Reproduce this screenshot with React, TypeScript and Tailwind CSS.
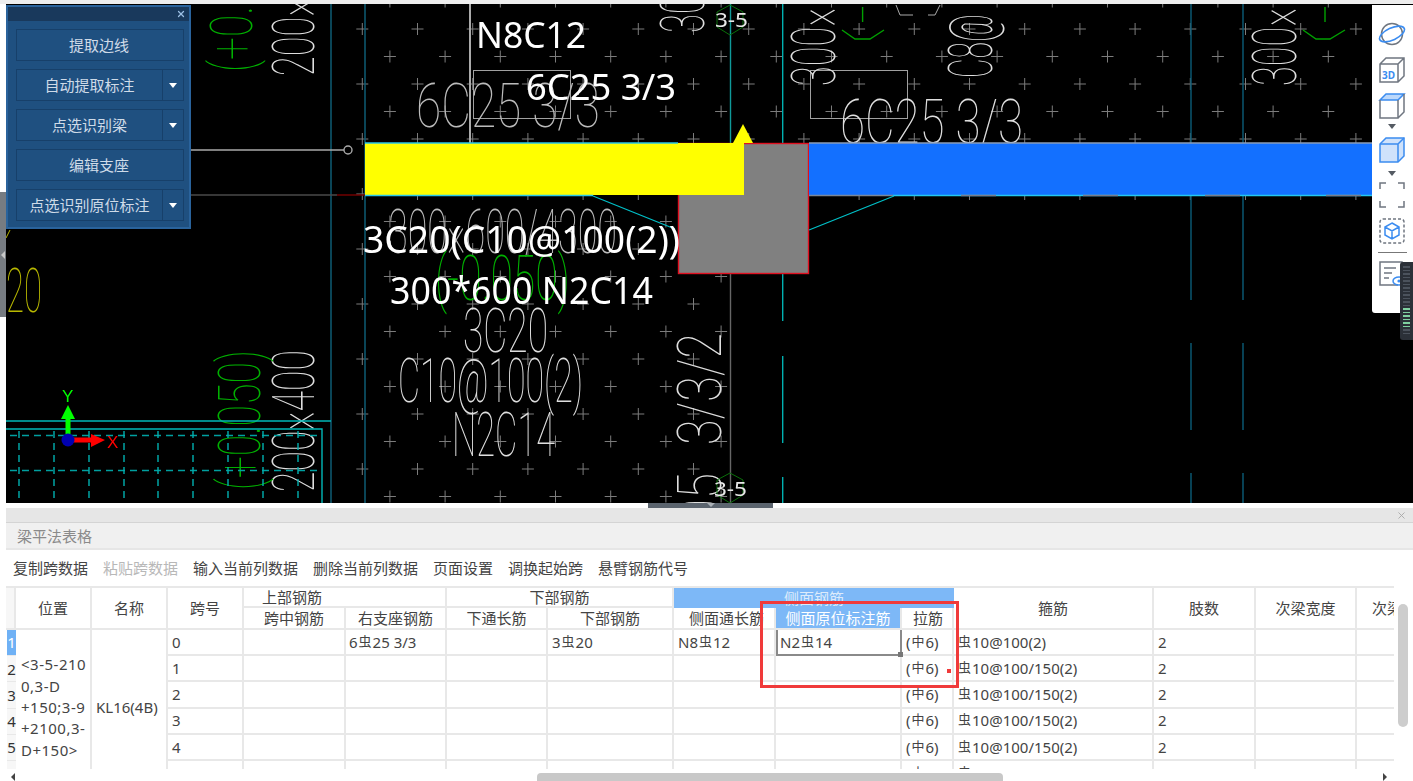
import type { ReactNode } from "react";
import { X } from "lucide-react";

// table columns, widths read off the reference
const columns = "grid-cols-[10px_76px_76px_76px_102px_101px_101px_126px_102px_126px_52px_200px_102px_101px_101px]";

function Cell({ className = "", children }: { className?: string; children?: ReactNode }) {
    return (
        <div className={`border-r-2 border-b-2 border-[#e8e8e8] flex items-center overflow-hidden whitespace-nowrap ${className}`}>
            {children}
        </div>
    );
}

function Head({ className = "", children }: { className?: string; children?: ReactNode }) {
    return <Cell className={`justify-center text-[#444] ${className}`}>{children}</Cell>;
}

// rebar grade symbols, set a little smaller and higher than the digits
function Bar({ plain }: { plain?: boolean }) {
    return <span className="text-[13px] relative -top-[2px] mx-[1px]">{plain ? "中" : "虫"}</span>;
}

function Rebar({ before, after, plain }: { before?: string; after: string; plain?: boolean }) {
    return (
        <span>
            {before}
            <Bar plain={plain} />
            {after}
        </span>
    );
}

function Body() {
    const rows = [0, 1, 2, 3, 4, 5];
    return (
        <>
            {rows.map((r) => {
                const rowStart = ["row-start-3", "row-start-4", "row-start-5", "row-start-6", "row-start-7", "row-start-8"][r];
                return (
                    <div key={r} className="contents">
                        <div className={`col-start-1 ${rowStart} flex items-center justify-center border-b border-[#e8e8e8] ml-[1px] ${r === 0 ? "bg-[#6fb1f5] text-white" : "bg-[#f7f7f7] text-[#333]"}`}>{r + 1}</div>
                        <Cell className={`col-start-4 ${rowStart} pl-[4px]`}>{r}</Cell>
                        <Cell className={`col-start-5 ${rowStart}`} />
                        <Cell className={`col-start-6 ${rowStart} pl-[3px]`}>{r === 0 && <Rebar before="6" after="25 3/3" />}</Cell>
                        <Cell className={`col-start-7 ${rowStart}`} />
                        <Cell className={`col-start-8 ${rowStart} pl-[4px]`}>{r === 0 && <Rebar before="3" after="20" />}</Cell>
                        <Cell className={`col-start-9 ${rowStart} pl-[4px]`}>{r === 0 && <Rebar before="N8" after="12" />}</Cell>
                        {r === 0 ? (
                            <div className={`col-start-10 ${rowStart} relative border-2 border-t-0 border-[#8a8a8a] flex items-center pl-[2px] overflow-visible`}>
                                <Rebar before="N2" after="14" />
                                <span className="absolute -right-[3px] -bottom-[3px] size-[5px] bg-[#777]" />
                            </div>
                        ) : (
                            <Cell className={`col-start-10 ${rowStart}`} />
                        )}
                        <Cell className={`col-start-11 ${rowStart} pl-[4px]`}>
                            <Rebar before="(" after="6)" plain />
                        </Cell>
                        <Cell className={`col-start-12 ${rowStart} pl-[3px]`}>
                            <Rebar after={r === 0 ? "10@100(2)" : "10@100/150(2)"} />
                        </Cell>
                        <Cell className={`col-start-13 ${rowStart} pl-[4px]`}>2</Cell>
                        <Cell className={`col-start-14 ${rowStart}`} />
                        <Cell className={`col-start-15 ${rowStart}`} />
                    </div>
                );
            })}
        </>
    );
}

function BeamTable() {
    return (
        <div className="w-[1388px] h-[183px] overflow-hidden border-t-2 border-[#e8e8e8]">
            <div className={`grid ${columns} grid-rows-[20px_22px_repeat(6,26.2px)] w-[1475px] text-[15px] text-[#444]`}>
                <div className="row-span-2 border-r-2 border-b-2 border-[#e8e8e8] bg-[#f7f7f7]" />
                <Head className="row-span-2">位置</Head>
                <Head className="row-span-2">名称</Head>
                <Head className="row-span-2">跨号</Head>
                <div className="col-span-2 border-r-2 border-b-2 border-[#e8e8e8] flex items-center pl-[18px]">上部钢筋</div>
                <div className="col-span-2 border-r-2 border-b-2 border-[#e8e8e8] flex items-center justify-center">下部钢筋</div>
                <div className="col-span-3 bg-[#7db8f7] text-[#dcebfb] flex items-center justify-center">侧面钢筋</div>
                <Head className="row-span-2 col-start-12">箍筋</Head>
                <Head className="row-span-2 col-start-13">肢数</Head>
                <Head className="row-span-2 col-start-14">次梁宽度</Head>
                <div className="row-span-2 col-start-15 border-b-2 border-[#e8e8e8] flex items-center pl-[15px] whitespace-nowrap">次梁高度</div>

                <Head className="col-start-5 row-start-2">跨中钢筋</Head>
                <Head className="col-start-6 row-start-2">右支座钢筋</Head>
                <Head className="col-start-7 row-start-2">下通长筋</Head>
                <Head className="col-start-8 row-start-2">下部钢筋</Head>
                <Head className="col-start-9 row-start-2 !justify-start pl-[15px]">侧面通长筋</Head>
                <Head className="col-start-10 row-start-2 bg-[#7db8f7] !text-white">侧面原位标注筋</Head>
                <Head className="col-start-11 row-start-2 pl-[2px]">拉筋</Head>

                <Cell className="col-start-2 row-start-3 row-span-6 pl-[5px] !whitespace-pre-line leading-[21.3px] tracking-[0.5px]">
                    {"<3-5-210\n0,3-D\n+150;3-9\n+2100,3-\nD+150>"}
                </Cell>
                <Cell className="col-start-3 row-start-3 row-span-6 pl-[4px]">KL16(4B)</Cell>
                <Body />
            </div>
        </div>
    );
}

function PanelButton({ label, split }: { label: string; split?: boolean }) {
    return (
        <div className="h-[32px] flex border border-[#17406a] bg-[#1f5080] text-[15px] text-[#cfdbe8]">
            <div className={`flex-1 flex items-center justify-center ${split ? "" : "pr-[2px]"}`}>{label}</div>
            {split && (
                <div className="w-[21px] border-l border-[#17406a] flex items-center justify-center">
                    <span className="w-0 h-0 border-x-[4.5px] border-x-transparent border-t-[5px] border-t-white" />
                </div>
            )}
        </div>
    );
}

function FloatingPanel() {
    return (
        <div className="absolute left-0 top-[1px] w-[185px] h-[224px] bg-[#1f5080] border-2 border-[#2a639c]">
            <div className="h-[14px] bg-[#19395c] flex items-center justify-end pr-[3px]">
                <X className="size-[10px] text-[#9cc0e4]" strokeWidth={3} />
            </div>
            <div className="flex flex-col gap-[8px] pl-[8px] pr-[5px] pt-[8px]">
                <PanelButton label="提取边线" />
                <PanelButton label="自动提取标注" split />
                <PanelButton label="点选识别梁" split />
                <PanelButton label="编辑支座" />
                <PanelButton label="点选识别原位标注" split />
            </div>
        </div>
    );
}

const iconGray = "#6f7680";
const iconBlue = "#3b8cf0";

function Triangle({ className = "" }: { className?: string }) {
    return <span className={`w-0 h-0 border-x-[4px] border-x-transparent border-t-[5px] border-t-[#555b63] ${className}`} />;
}

function SideToolbar() {
    return (
        <div className="absolute right-0 top-[1px] w-[41px] h-[308px] bg-white rounded-bl-[3px] flex flex-col items-center pr-[1px] pt-[15px]">
            <svg width="28" height="28" viewBox="0 0 28 28" fill="none" strokeWidth="1.5">
                <circle cx="14" cy="14" r="10.5" stroke={iconGray} />
                <ellipse cx="14" cy="14" rx="13.5" ry="6" transform="rotate(-25 14 14)" stroke={iconBlue} strokeWidth="1.6" />
            </svg>
            <svg className="mt-[8px]" width="28" height="28" viewBox="0 0 28 28" fill="none" strokeWidth="1.5" stroke={iconGray}>
                <path d="M2 8 L8 2 H26 V20 L20 26 H2 Z M2 8 H20 V26 M20 8 L26 2" />
                <text x="4" y="23" fontSize="10" fontWeight="700" fill={iconBlue} stroke="none" fontFamily="Noto Sans">3D</text>
            </svg>
            <svg className="mt-[8px]" width="28" height="28" viewBox="0 0 28 28" fill="none" strokeWidth="1.5" stroke={iconGray}>
                <path d="M2 8 L8 2 H26 L20 8 Z" fill="#bcd8fb" stroke={iconBlue} />
                <path d="M2 8 V26 H20 V8 M20 26 L26 20 V2" />
            </svg>
            <Triangle className="mt-[4px]" />
            <svg className="mt-[7px]" width="28" height="28" viewBox="0 0 28 28" fill="#cfe2fb" strokeWidth="1.5" stroke={iconBlue}>
                <path d="M2 8 L8 2 H26 V20 L20 26 H2 Z" />
                <path d="M2 8 H20 V26 M20 8 L26 2" fill="none" />
            </svg>
            <Triangle className="mt-[7px]" />
            <svg className="mt-[5px]" width="28" height="28" viewBox="0 0 28 28" fill="none" strokeWidth="1.5" stroke={iconGray}>
                <path d="M2 8 V2 H8 M20 2 H26 V8 M26 20 V26 H20 M8 26 H2 V20" />
            </svg>
            <svg className="mt-[8px]" width="28" height="28" viewBox="0 0 28 28" fill="none" strokeWidth="1.5">
                <rect x="2" y="2" width="24" height="24" rx="3" stroke={iconGray} strokeDasharray="3 2" />
                <path d="M14 6 L21 10 V18 L14 22 L7 18 V10 Z M7 10 L14 14 L21 10 M14 14 V22" stroke={iconBlue} />
            </svg>
            <div className="w-[29px] h-[1px] bg-[#777] mt-[7px]" />
            <svg className="mt-[7px]" width="28" height="28" viewBox="0 0 28 28" fill="none" strokeWidth="1.5">
                <path d="M20 25 H2 V2 H24 V14" stroke={iconGray} />
                <path d="M6 8 H18 M6 13 H14 M6 18 H11" stroke={iconGray} />
                <ellipse cx="21" cy="21" rx="6" ry="4" stroke={iconBlue} />
                <circle cx="21" cy="21" r="1.6" fill={iconBlue} />
            </svg>
        </div>
    );
}

function Meter() {
    const ticks = [0, 1, 2, 3, 4, 5, 6, 7, 8, 9, 10, 11, 12, 13, 14, 15, 16, 17, 18, 19];
    return (
        <div className="absolute right-0 top-[258px] w-[13px] h-[78px] bg-[#2b3038] rounded-l-[3px] flex flex-col items-center gap-[2px] pt-[4px]">
            {ticks.map((t) => (
                <span key={t} className={`w-[7px] h-[1.5px] ${t > 11 && t < 18 ? "bg-[#7fd0a0]" : "bg-[#4b525c]"}`} />
            ))}
        </div>
    );
}

// stroke-like text of the CAD drawing: thin face stretched to the box it fills
function Cad({ x, y, w, h, text, color = "#dedede", up }: { x: number; y: number; w: number; h: number; text: string; color?: string; up?: boolean }) {
    return (
        <text
            transform={`translate(${x} ${y})${up ? " rotate(-90)" : ""}`}
            fontFamily="Roboto, sans-serif"
            fontWeight="100"
            fontSize={h / 0.71}
            textLength={w}
            lengthAdjust="spacingAndGlyphs"
            fill={color}
        >
            {text}
        </text>
    );
}

function Label({ x, y, w, size, text }: { x: number; y: number; w: number; size: number; text: string }) {
    return (
        <text x={x} y={y} fontFamily="Noto Sans, sans-serif" fontSize={size} textLength={w} lengthAdjust="spacingAndGlyphs" fill="#fff">
            {text}
        </text>
    );
}

function crossPath() {
    let d = "";
    for (let n = -1; n < 18; n++) {
        const y = 29 + 27.5 * n;
        const start = n % 2 === 0 ? 362.3 : 389.9;
        for (let x = start; x < 1372; x += 55.2) {
            if (y > 196 && x > 728) continue;
            d += `M${x - 6} ${y}H${x + 6}M${x} ${y - 6}V${y + 6}`;
        }
    }
    return d;
}

function Drawing() {
    const dashX = [19, 54, 89, 124, 158, 193, 228, 263, 298];
    return (
        <svg className="absolute inset-0 will-change-transform" width="1407" height="499" viewBox="6 4 1407 499">
            <rect x="6" y="4" width="1407" height="499" fill="#000" />
            <path d={crossPath()} stroke="#7c7c7c" strokeWidth="1" fill="none" />

            {/* axis lines */}
            <path d="M331 4V503M365 4V503" stroke="#0e5c74" strokeWidth="1.5" />
            <path d="M1191 4V300M1191 343V430M1191 473V503M1243 4V300M1243 343V430M1243 473V503" stroke="#0b5c78" strokeWidth="1.4" />
            <path d="M730.5 4V143" stroke="#0f9a9a" strokeWidth="1.4" />
            <path d="M730.5 270V503" stroke="#666" strokeWidth="1.4" />
            <path d="M782.7 4V143M782.7 270V321M782.7 356V443M782.7 477V503" stroke="#00b0b0" strokeWidth="1.4" />
            <path d="M191 150H344" stroke="#aaa" strokeWidth="1.4" />
            <circle cx="348" cy="150" r="4" stroke="#aaa" strokeWidth="1.4" fill="none" />
            <path d="M191 195H337" stroke="#4a4a4a" strokeWidth="1.4" />
            <path d="M337 195H365" stroke="#7a0000" strokeWidth="1.4" />
            <path d="M470 4V143" stroke="#aaa" strokeWidth="2" />
            <rect x="473.5" y="70.5" width="97" height="48" stroke="#a0a0a0" fill="none" />
            <rect x="810.5" y="70.5" width="97" height="48" stroke="#a0a0a0" fill="none" />

            {/* thin drawing text */}
            <Cad x={416} y={127} w={184} h={44} text="6C25 3/3" color="#bbb" />
            <Cad x={840} y={143} w={183} h={43} text="6C25 3/3" />
            <Cad x={388} y={253} w={229} h={44} text="300×600/4300" color="#bbb" />
            <Cad x={435} y={300} w={135} h={45} text="(-0.050)" color="#00b000" />
            <Cad x={463} y={352} w={85} h={43} text="3C20" />
            <Cad x={398} y={402} w={185} h={44} text="C10@100(2)" />
            <Cad x={452} y={456} w={103} h={43} text="N2C14" />
            <Cad x={314} y={492} w={142} h={42} text="200×400" up />
            <Cad x={260} y={490} w={140} h={42} text="(+0.050)" color="#00b000" up />
            <Cad x={314} y={76} w={78} h={42} text="200×" up />
            <Cad x={252} y={72} w={66} h={42} text="(+0." color="#00b000" up />
            <Cad x={835} y={86} w={78} h={43} text="300×" up />
            <Cad x={1296} y={86} w={78} h={43} text="300×" up />
            <Cad x={992} y={78} w={64} h={44} text="C8@" up />
            <Cad x={704} y={33} w={38} h={43} text="30" up />
            <Cad x={721} y={445} w={112} h={43} text="3/3/2" up />
            <Cad x={721} y={525} w={52} h={43} text="05" up />
            <Cad x={6} y={312} w={36} h={44} text="20" color="#b8b800" />
            <path d="M842 30L855 39H870L884 30M1303 30L1316 39H1330L1345 30" stroke="#00a000" strokeWidth="1.4" fill="none" />
            <path d="M862.6 7V22M1325 7V22" stroke="#00a000" strokeWidth="1.4" />
            <path d="M896 5L900 15H913M928 15H935L940 5" stroke="#aaa" fill="none" />
            <path d="M6 238L10 230" stroke="#b8b800" />

            {/* coloured beams and column */}
            <rect x="678.5" y="143.5" width="130" height="130" fill="#808080" stroke="#e01020" strokeWidth="1.4" />
            <rect x="365" y="143" width="379" height="52" fill="#ffff00" />
            <path d="M365 143H678M365 195.5H593" stroke="#28c8e8" strokeWidth="1.4" />
            <rect x="809" y="143" width="563" height="53" fill="#1370ff" />
            <path d="M809 143H1372" stroke="#8a9cb8" strokeWidth="1.6" />
            <path d="M809 195.5H893" stroke="#7a8698" strokeWidth="1.4" />
            <path d="M893 195.5H1372" stroke="#22c8f0" strokeWidth="1.4" />
            <path d="M961 195.5H996M1083 195.5H1118M1205 195.5H1240M1326 195.5H1361" stroke="#7a7a8a" strokeWidth="1.4" />
            <path d="M593 196L675 229M809 230L894 196" stroke="#00c0c8" strokeWidth="1.2" fill="none" />
            <path d="M743 124L733 143H753Z" fill="#ffff00" />

            {/* grid marker bubbles */}
            <polygon points="730,5 743,12 743,27 730,35 717,27 717,12" fill="none" stroke="#0a700a" />
            <polygon points="730,473 743,480 743,495 730,503 717,495 717,480" fill="none" stroke="#0a700a" />
            <text x="715" y="27" fontFamily="Noto Sans, sans-serif" fontSize="19" textLength="33" lengthAdjust="spacingAndGlyphs" fill="#e8e8e8">3-5</text>
            <text x="714" y="496" fontFamily="Noto Sans, sans-serif" fontSize="19" textLength="33" lengthAdjust="spacingAndGlyphs" fill="#e8e8e8">3-5</text>

            {/* selected beam annotations */}
            <Label x={476} y={48} w={110} size={36} text="N8C12" />
            <Label x={526} y={100} w={150} size={36} text="6C25 3/3" />
            <Label x={363} y={253} w={317} size={38} text="3C20(C10@100(2))" />
            <Label x={390} y={304} w={263} size={38} text="300*600 N2C14" />

            {/* block at lower left */}
            <path d="M6 421H331M6 429H322V503" stroke="#00b8b8" strokeWidth="1.4" fill="none" />
            <path d="M10 435.5H320M10 470.5H318" stroke="#00a0a0" strokeWidth="1.4" strokeDasharray="7 5" />
            {dashX.map((x) => (
                <path key={x} d={`M${x} 431V503`} stroke="#00b0b0" strokeWidth="1.4" strokeDasharray="7 5" />
            ))}
            <path d="M68 436V418" stroke="#00ff00" strokeWidth="5" />
            <path d="M68 405L75 419H61Z" fill="#00ff00" />
            <text x="62" y="402" fontFamily="Liberation Sans, sans-serif" fontSize="17" fill="#00ff00">Y</text>
            <path d="M72 440H92" stroke="#ff0000" strokeWidth="5" />
            <path d="M105 440L91 434V447Z" fill="#ff0000" />
            <text x="107" y="448" fontFamily="Liberation Sans, sans-serif" fontSize="17" fill="#ff0000">X</text>
            <circle cx="68" cy="440" r="6.5" fill="#0000b0" />
        </svg>
    );
}

export default function App() {
    const tools = ["复制跨数据", "粘贴跨数据", "输入当前列数据", "删除当前列数据", "页面设置", "调换起始跨", "悬臂钢筋代号"];
    return (
        <div className="relative w-[1413px] h-[781px] overflow-hidden bg-white font-['Noto_Sans','Noto_Sans_CJK_SC',sans-serif]">
            <div className="h-[4px] bg-[#eeeeee]" />
            <div className="relative h-[499px] ml-[6px] overflow-hidden">
                <Drawing />
                <FloatingPanel />
                <SideToolbar />
                <Meter />
            </div>
            {/* left edge grip */}
            <div className="absolute left-0 top-[192px] w-[6px] h-[125px] bg-[#777c82] flex items-center justify-center">
                <span className="w-0 h-0 border-y-[4px] border-y-transparent border-r-[4px] border-r-[#c8c8c8]" />
            </div>
            {/* splitter handle */}
            <div className="h-[5px] flex justify-start pl-[648px]">
                <div className="w-[125px] h-[5px] bg-[#5b646e] flex justify-center">
                    <span className="w-0 h-0 border-x-[4px] border-x-transparent border-t-[4px] border-t-[#aab0b6]" />
                </div>
            </div>
            <div className="ml-[6px] relative">
                <div className="h-[15px] bg-[#e6e6e6] border-b border-[#d4d4d4] flex justify-end items-center pr-[6px]">
                    <X className="size-[11px] text-[#a8a8a8]" />
                </div>
                <div className="h-[27px] bg-[#f0f0f0] border-b-2 border-[#e6e6e6] flex items-center pl-[11px] pt-[1px] text-[15px] text-[#8a8a8a]">梁平法表格</div>
                <div className="h-[36px] flex items-center gap-[15px] pl-[7px] text-[15px] text-[#444]">
                    {tools.map((t) => (
                        <span key={t} className={t === "粘贴跨数据" ? "text-[#b8b8b8]" : ""}>{t}</span>
                    ))}
                </div>
                <BeamTable />
                <div className="relative h-[12px]">
                    <span className="absolute left-[5px] top-[4px] w-0 h-0 border-y-[4px] border-y-transparent border-r-[4px] border-r-[#444]" />
                    <div className="absolute left-[531px] top-[4px] w-[466px] h-[8px] bg-[#c8c8c8] rounded-t-[4px]" />
                    <span className="absolute left-[1377px] top-[4px] w-0 h-0 border-y-[4px] border-y-transparent border-l-[4px] border-l-[#444]" />
                </div>
                {/* vertical scrollbar */}
                <div className="absolute left-[1392px] top-[96px] w-[10px] h-[123px] bg-[#cdcdcd] rounded-[5px]" />
            </div>
            {/* red annotation box drawn over the table */}
            <div className="absolute left-[760px] top-[601px] w-[199px] h-[87px] border-[3px] border-[#f03a3a]" />
            <span className="absolute left-[947px] top-[669px] size-[4px] bg-[#f03a3a]" />
        </div>
    );
}
